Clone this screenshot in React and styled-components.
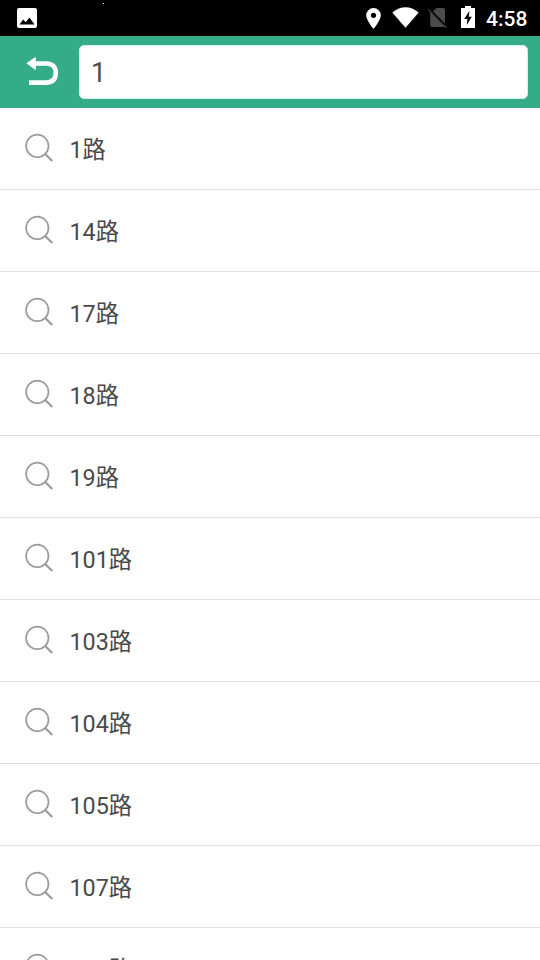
import React from "react";
import styled, { createGlobalStyle } from "styled-components";

const GlobalStyle = createGlobalStyle`
  * { box-sizing: border-box; }
  html, body { margin: 0; padding: 0; background: #fff; overflow: hidden; }
`;

const Screen = styled.div`
  width: 540px;
  height: 960px;
  display: flex;
  flex-direction: column;
  overflow: hidden;
  background: #fefefe;
  font-family: Roboto, "Noto Sans CJK SC", sans-serif;
`;

const StatusBar = styled.div`
  flex: none;
  height: 36px;
  background: #000;
  display: flex;
  align-items: flex-start;
  justify-content: space-between;
`;

const StatusIcons = styled.svg`
  display: block;
  flex: none;
  width: ${(p) => p.$width}px;
  height: 36px;
`;

const StatusRight = styled.div`
  display: flex;
  align-items: flex-start;
  padding-right: 12px;
`;

const Clock = styled.span`
  color: #fff;
  font-size: 21px;
  font-weight: 500;
  line-height: 38px;
  width: 42px;
  white-space: nowrap;
`;

const Header = styled.header`
  flex: none;
  height: 72px;
  background: #34ad87;
  display: flex;
  align-items: flex-start;
  padding: 9px 12px 0 0;
`;

const BackButton = styled.button`
  width: 79px;
  height: 54px;
  padding: 0;
  border: 0;
  background: none;

  svg {
    display: block;
  }
`;

const SearchField = styled.input`
  flex: 1;
  min-width: 0;
  height: 54px;
  padding: 2px 12px 0 11px;
  border: 1px solid #d5eee6;
  border-radius: 5px;
  background: #fff;
  color: #4d4d4d;
  font: 400 27px Roboto, sans-serif;
  outline: none;
`;

const ResultList = styled.ul`
  flex: none;
  margin: 0;
  padding: 0;
  list-style: none;
`;

const ResultRow = styled.li`
  height: 82px;
  display: flex;
  align-items: center;
  padding-left: 24px;
  border-bottom: 1px solid #e0e0e0;
`;

const SearchIcon = styled.svg`
  flex: none;
  width: 30px;
  height: 30px;
  margin: 0 15.5px 2px 0;
`;

const RouteName = styled.span`
  color: #4a4a4a;
  font-size: 23.3px;
  line-height: 32px;
  padding-top: 3px;
`;

const routes = ["1路", "14路", "17路", "18路", "19路", "101路", "103路", "104路", "105路", "107路", "108路"];

export default function App() {
  return (
    <Screen>
      <GlobalStyle />
      <StatusBar>
        <StatusIcons $width={120} viewBox="0 0 120 36">
          <rect x="17" y="8" width="20" height="20" rx="2" fill="#fff" />
          <path d="M19.5 24.5L23.2 19.5L25.7 22.2L29.5 17.5L34.5 24.5Z" fill="#000" />
          <rect x="103" y="3" width="1" height="1" fill="#fff" />
        </StatusIcons>
        <StatusRight>
          <StatusIcons $width={126} viewBox="360 0 126 36">
            <path fill="#fff" fillRule="evenodd" d="M373.5 8a7.3 7.3 0 0 0-7.3 7.3c0 5.3 7.3 13.5 7.3 13.5s7.3-8.2 7.3-13.5A7.3 7.3 0 0 0 373.5 8zm0 4.7a2.6 2.6 0 1 1 0 5.2a2.6 2.6 0 0 1 0-5.2z" />
            <path fill="#fff" d="M392.3 12.6Q405.5 1.8 418.7 12.6L405.5 27.8Z" />
            <path fill="#4b4b4b" d="M436.5 8H443.2Q445 8 445 9.8V23.6L432.9 11.4ZM430.2 11.8L445 26.7Q444.6 27 443.6 27H432Q430.2 27 430.2 25.2Z" />
            <path stroke="#3c3c3c" strokeWidth="1.4" d="M428.4 9.4L446.6 27.8" />
            <path stroke="#0c0c0c" strokeWidth="1.6" d="M431.5 11.3L445 24.9" />
            <path fill="#fff" d="M461 8H465V6H471V8H475V28H461Z" />
            <path fill="#000" d="M469.4 10.8L464.2 19H467.4L466.8 25L471.8 16.8H468.8Z" />
          </StatusIcons>
          <Clock>4:58</Clock>
        </StatusRight>
      </StatusBar>
      <Header>
        <BackButton aria-label="返回">
          <svg width="79" height="54" viewBox="0 45 79 54">
            <path fill="#fff" d="M26.3 63.3L35.8 56.8V70.3Z" />
            <path fill="none" stroke="#fff" strokeWidth="4.6" d="M34 63.5H46C52.5 63.5 55.8 67 55.8 72.5C55.8 79 52.5 82.6 46 82.6H29" />
          </svg>
        </BackButton>
        <SearchField defaultValue="1" aria-label="搜索线路" />
      </Header>
      <ResultList>
        {routes.map((route) => (
          <ResultRow key={route}>
            <SearchIcon viewBox="0 0 30 30" fill="none" stroke="#9b9b9b">
              <circle cx="13.3" cy="12.9" r="11.2" strokeWidth="1.7" />
              <path d="M21 20.7L28.2 28" strokeWidth="2.2" />
            </SearchIcon>
            <RouteName>{route}</RouteName>
          </ResultRow>
        ))}
      </ResultList>
    </Screen>
  );
}
